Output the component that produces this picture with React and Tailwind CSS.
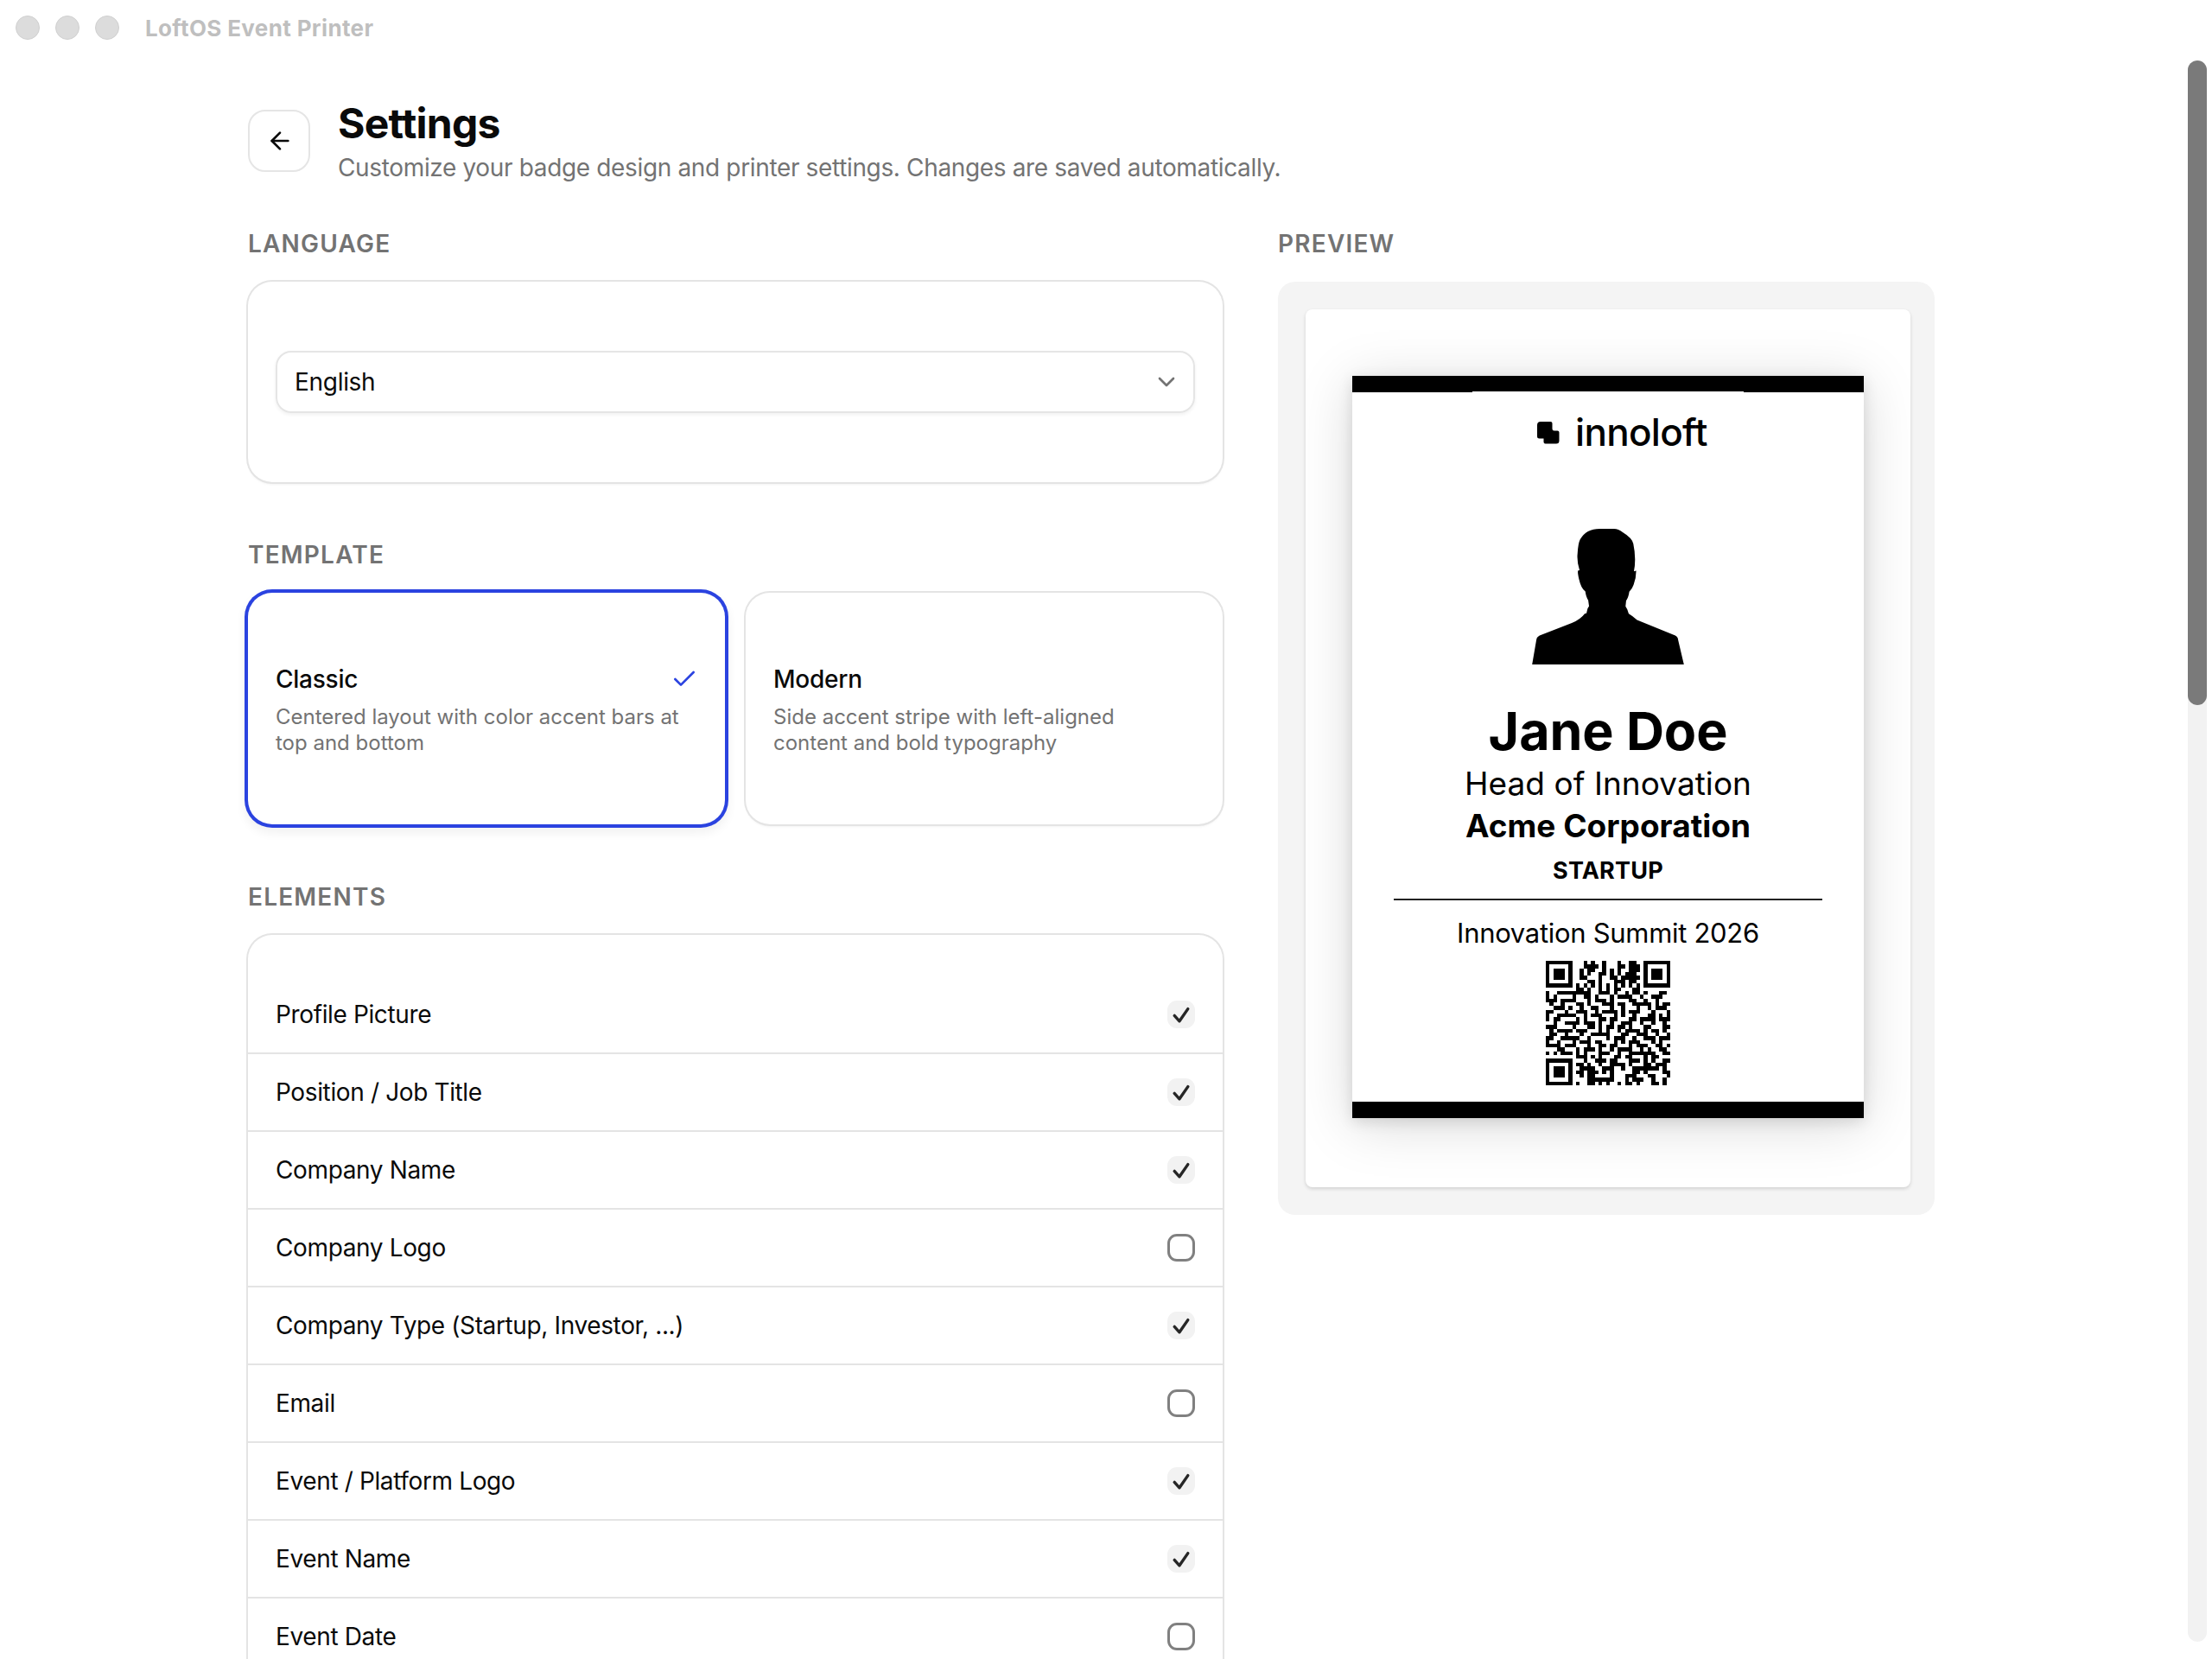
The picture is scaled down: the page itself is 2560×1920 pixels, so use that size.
import React, { useState } from 'react';
import { ArrowLeft, Check, ChevronDown } from 'lucide-react';

const TEMPLATES = [
  {
    id: 'classic',
    name: 'Classic',
    description: 'Centered layout with color accent bars at top and bottom',
  },
  {
    id: 'modern',
    name: 'Modern',
    description: 'Side accent stripe with left-aligned content and bold typography',
  },
];

const ELEMENTS = [
  { id: 'picture', label: 'Profile Picture', enabled: true },
  { id: 'position', label: 'Position / Job Title', enabled: true },
  { id: 'company', label: 'Company Name', enabled: true },
  { id: 'companyLogo', label: 'Company Logo', enabled: false },
  { id: 'companyType', label: 'Company Type (Startup, Investor, ...)', enabled: true },
  { id: 'email', label: 'Email', enabled: false },
  { id: 'eventLogo', label: 'Event / Platform Logo', enabled: true },
  { id: 'eventName', label: 'Event Name', enabled: true },
  { id: 'eventDate', label: 'Event Date', enabled: false },
];

const QR_ROWS = [
  '111111100010100100010011001111111',
  '100000100011110100011011101000001',
  '101110100101100101010011101011101',
  '101110100101001101010111001011101',
  '101110100110001001101111101011101',
  '100000100001101000111011001000001',
  '111111101010101010101010101111111',
  '000000001101001010110001100000000',
  '100111111111001110100101101000110',
  '101000010011010001011110010011100',
  '111011110001011101000011001001000',
  '010010001101000111011001111101011',
  '001110100100110001001000100101110',
  '110001001110010111101011100010001',
  '100111110010111000101001000110101',
  '101100001010001101100011011110111',
  '001001111011101001001110010010010',
  '111000010001101011011010001100011',
  '010111101110001010010111101011010',
  '011001000100111110001100111001001',
  '110011111001000010111001001110111',
  '100100010111011000101011100010100',
  '111101110001001101100010111001101',
  '000110001011101001011110010100110',
  '101011101010001110010011111110011',
  '000000001110101000110110001011000',
  '111111100010011101100011101010011',
  '100000101101001001111010001101110',
  '101110100111100111001001111111010',
  '101110101101110101000001101000011',
  '101110100101100001000111000110001',
  '100000100001111111000101110010010',
  '111111101001101010010110100011010',
];

const QrCode = () => (
  <svg className="w-36 h-36 shrink-0" viewBox="0 0 33 33" shapeRendering="crispEdges">
    {QR_ROWS.map((row, y) =>
      [...row].map((bit, x) =>
        bit === '1' ? <rect key={`${x}-${y}`} x={x} y={y} width={1} height={1} fill="#000" /> : null
      )
    )}
  </svg>
);

const TitleBar = () => (
  <div className="h-16 shrink-0 flex items-center pl-[18px]">
    <div className="flex gap-[18px]">
      <span className="size-7 rounded-full bg-[#dcdcdc] border border-[#d0d0d0]" />
      <span className="size-7 rounded-full bg-[#dcdcdc] border border-[#d0d0d0]" />
      <span className="size-7 rounded-full bg-[#dcdcdc] border border-[#d0d0d0]" />
    </div>
    <span className="ml-[30px] pt-px text-[26px] font-bold tracking-[0.36px] text-[#bfbfbf]">
      LoftOS Event Printer
    </span>
  </div>
);

const Section = ({ title, children }) => (
  <section>
    <h2 className="mb-6 text-[28px] leading-10 font-semibold tracking-[1.2px] uppercase text-[#737373]">
      {title}
    </h2>
    {children}
  </section>
);

const Checkbox = ({ checked, onChange }) => (
  <button
    type="button"
    role="checkbox"
    aria-checked={checked}
    onClick={onChange}
    className={
      checked
        ? 'size-8 rounded-[11px] bg-[#f2f2f2] flex items-center justify-center'
        : 'size-8 rounded-[11px] border-3 border-[#808080]'
    }
  >
    {checked && (
      <svg className="size-8" viewBox="0 0 32 32" fill="none" stroke="#262626">
        <path d="M8.2 17.4L14 23.8L23.8 9.6" strokeWidth="3.4" strokeLinecap="round" strokeLinejoin="round" />
      </svg>
    )}
  </button>
);

const TemplateCard = ({ template, selected, onSelect }) => (
  <button
    type="button"
    onClick={onSelect}
    className={
      selected
        ? 'h-[268px] rounded-[28px] pl-8 pr-[31px] flex flex-col justify-center text-left ring-4 ring-[#2b43e0] shadow-[0_6px_12px_4px_rgba(0,0,0,0.06)]'
        : 'h-[268px] rounded-[28px] pl-8 pr-[31px] flex flex-col justify-center text-left ring-2 ring-[#e4e4e4] shadow-[0_3px_3px_rgba(0,0,0,0.05)]'
    }
  >
    <div className="w-full flex items-center justify-between">
      <span className="text-[28px] leading-10 font-medium tracking-[-0.25px] text-[#0a0a0a]">{template.name}</span>
      {selected && <Check className="size-8 text-[#2b43e0]" strokeWidth={2} />}
    </div>
    <p className="mt-[9px] max-w-[474px] text-[24px] leading-[30px] text-[#737373]">{template.description}</p>
  </button>
);

const BadgePreview = () => (
  <div className="w-[592px] h-[859px] bg-white flex flex-col items-center text-black shadow-[0_8px_60px_rgba(0,0,0,0.15),0_4px_16px_rgba(0,0,0,0.12)]">
    <div className="w-full h-[19px] shrink-0 bg-black" />
    <div className="-mt-px w-[314px] h-[70px] shrink-0 bg-white pt-[25px] pl-[75px] flex items-start">
      <svg className="mt-[10px] w-[26px] h-[26px] shrink-0" viewBox="0 0 26 26">
        <path
          d="M4 0H15.5Q17.5 0 17.5 2V8Q17.5 10.5 20 10.5H23.5Q25.5 10.5 25.5 12.5V22Q25.5 25.5 22 25.5H9.500Q7.500 25.500 7.500 23.500V19.500H2.500Q0 19.500 0 17V4Q0 0 4 0Z"
          fill="#000"
        />
      </svg>
      <span className="ml-[18px] text-[44px] leading-[44px] font-medium tracking-[-0.7px]">innoloft</span>
    </div>
    <svg className="mt-[89px] w-[176px] h-[157px] shrink-0" viewBox="340 155 528 472">
      <path
        d="M340 627L355 540Q357 530 366 526L478 483Q510 468 523 450L529 449L533 432L538 424L535 403Q528 394 525 373Q510 362 503 330Q497 304 500 300L505 299Q495 270 498 240Q500 205 507 192Q528 155 575 155H625Q640 155 655 167Q688 187 692 207Q698 235 698 262Q698 285 694 303L702 301Q702 325 693 350Q688 365 678 374Q675 395 667 405L665 425L671 435L676 450Q690 458 705 472L838 526Q848 532 848 542L868 627Z"
        fill="#000"
      />
    </svg>
    <div className="mt-[47px] text-[61px] leading-[60px] font-bold tracking-[-0.1px]">Jane Doe</div>
    <div className="mt-[6px] text-[37px] leading-[50px] tracking-[0.05px]">Head of Innovation</div>
    <div className="text-[37px] leading-[48px] font-bold">Acme Corporation</div>
    <div className="mt-[10px] text-[27px] leading-9 font-bold tracking-[0.2px]">STARTUP</div>
    <div className="mt-[14px] w-[496px] h-0.5 shrink-0 bg-[#222]" />
    <div className="mt-[18px] mb-3 text-[31px] leading-10 tracking-[-0.3px]">Innovation Summit 2026</div>
    <QrCode />
    <div className="mt-auto w-full h-[19px] shrink-0 bg-black" />
  </div>
);

const App = () => {
  const [template, setTemplate] = useState('classic');
  const [elements, setElements] = useState(ELEMENTS);

  const toggleElement = (id) => {
    setElements(elements.map(item =>
      item.id === id ? { ...item, enabled: !item.enabled } : item
    ));
  };

  return (
    <div className="w-[2560px] h-[1920px] overflow-hidden flex flex-col bg-white font-['Inter',sans-serif] text-[#0a0a0a]">
      <TitleBar />

      <div className="flex-1 min-h-0 flex">
        <main className="flex-1 min-w-0 pt-[49px] pl-[287px] overflow-hidden">
          <header className="h-[101px] flex items-center gap-8">
            <button
              type="button"
              className="mb-[2px] size-[72px] shrink-0 rounded-[20px] border-2 border-[#e5e5e5] flex items-center justify-center pl-px pt-px"
            >
              <ArrowLeft className="size-8" />
            </button>
            <div>
              <h1 className="text-[48px] leading-[60px] font-bold tracking-[-0.75px]">Settings</h1>
              <p className="mt-px text-[28px] leading-10 tracking-[-0.35px] text-[#737373]">
                Customize your badge design and printer settings. Changes are saved automatically.
              </p>
            </div>
          </header>

          <div className="mt-12 flex gap-16 items-start">
            <div className="w-[1128px] flex flex-col gap-16">
              <Section title="Language">
                <div className="rounded-[28px] ring-2 ring-[#e4e4e4] shadow-[0_3px_3px_rgba(0,0,0,0.05)] px-8 py-20">
                  <button
                    type="button"
                    className="w-full h-[72px] rounded-[18px] border-2 border-[#e5e5e5] shadow-[0_2px_4px_rgba(0,0,0,0.06)] pl-5 pr-[15px] flex items-center justify-between"
                  >
                    <span className="text-[28px] tracking-[-0.3px]">English</span>
                    <ChevronDown className="size-8 text-[#737373]" />
                  </button>
                </div>
              </Section>

              <Section title="Template">
                <div className="grid grid-cols-2 gap-6">
                  {TEMPLATES.map((item) => (
                    <TemplateCard
                      key={item.id}
                      template={item}
                      selected={item.id === template}
                      onSelect={() => setTemplate(item.id)}
                    />
                  ))}
                </div>
              </Section>

              <Section title="Elements">
                <div className="rounded-[28px] ring-2 ring-[#e4e4e4] py-12">
                  {elements.map((item) => (
                    <div
                      key={item.id}
                      className="h-[90px] px-8 flex items-center justify-between border-b-2 border-[#e4e4e4]"
                    >
                      <span className="text-[28px] tracking-[-0.37px]">{item.label}</span>
                      <Checkbox checked={item.enabled} onChange={() => toggleElement(item.id)} />
                    </div>
                  ))}
                </div>
              </Section>
            </div>

            <div className="w-[760px]">
              <Section title="Preview">
                <div className="h-[1080px] rounded-[20px] bg-[#f4f4f4] pt-8 pl-8">
                  <div className="w-[700px] h-[1016px] rounded-lg bg-white pt-[77px] flex justify-center items-start overflow-hidden shadow-[0_2px_4px_rgba(0,0,0,0.14)]">
                    <BadgePreview />
                  </div>
                </div>
              </Section>
            </div>
          </div>
        </main>

        {/* Scrollbar */}
        <div className="mt-[6px] mb-5 mr-[6px] w-[22px] shrink-0 rounded-full bg-[#f2f2f2]">
          <div className="h-[746px] rounded-full bg-[#7a7a7a]" />
        </div>
      </div>
    </div>
  );
};

export default App;
